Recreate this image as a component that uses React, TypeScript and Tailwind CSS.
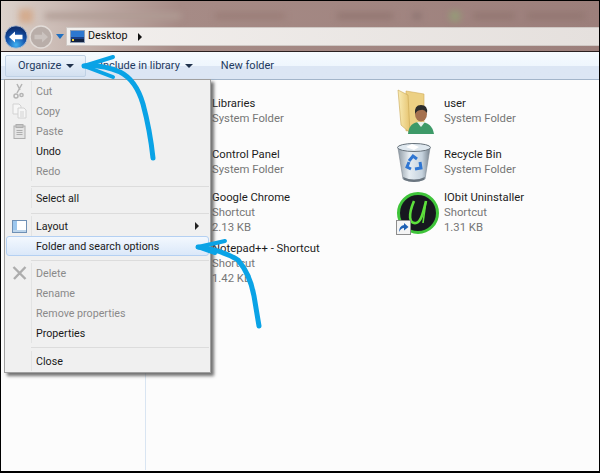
const font = "[font-family:'Roboto','Open_Sans',sans-serif]";

function BackButton() {
    return (
        <svg width="24" height="24" viewBox="0 0 24 24">
            <defs>
                <radialGradient id="back" cx="50%" cy="85%" r="75%">
                    <stop offset="0%" stopColor="#3fb2f2" />
                    <stop offset="55%" stopColor="#1656ae" />
                    <stop offset="100%" stopColor="#0c2f72" />
                </radialGradient>
            </defs>
            <circle cx="12" cy="12" r="11.2" fill="url(#back)" stroke="#b9c8da" strokeWidth="0.8" />
            <path d="M5 12 L11 6.5 V9.8 H18.5 V14.2 H11 V17.5 Z" fill="#fff" />
        </svg>
    );
}

function ForwardButton() {
    return (
        <svg width="24" height="24" viewBox="0 0 24 24">
            <circle cx="12" cy="12" r="11" fill="#b9aea9" stroke="#e2dcd8" strokeWidth="1.4" />
            <path d="M19 12 L13 6.5 V9.8 H5.5 V14.2 H13 V17.5 Z" fill="#cbc3bf" />
        </svg>
    );
}

function MonitorIcon() {
    return (
        <svg width="15" height="13" viewBox="0 0 15 13">
            <rect x="0.5" y="0.5" width="14" height="12" fill="#1b3f86" stroke="#8f9fb5" />
            <rect x="1" y="1" width="13" height="6" fill="#2d77cf" />
            <rect x="1" y="9" width="13" height="3" fill="#12213f" />
            <rect x="2" y="9" width="2" height="2" fill="#f3d23c" />
        </svg>
    );
}

function UserFolderIcon() {
    return (
        <svg width="44" height="46" viewBox="0 0 44 46">
            <defs>
                <linearGradient id="folder" x1="0" y1="0" x2="1" y2="0">
                    <stop offset="0%" stopColor="#f9ecb6" />
                    <stop offset="100%" stopColor="#e6c470" />
                </linearGradient>
            </defs>
            <path d="M10 2 L28 5 V36 L10 42 Z" fill="#ecd084" stroke="#d0ab5b" strokeWidth="0.6" />
            <path d="M2 1 L12 6 L14 44 L5 36 Z" fill="url(#folder)" stroke="#c9a653" strokeWidth="0.6" />
            <path d="M12 45 Q13 33 24 33 Q36 33 38 45 Z" fill="#3d9a68" />
            <path d="M21 33 L25 38 L29 33 Z" fill="#e8f2ec" />
            <ellipse cx="25" cy="25" rx="6" ry="7.5" fill="#a5714f" />
            <path d="M19 25 Q18 16 25 16 Q32 16 31 24 Q28 20 25 21 Q21 21 19 25 Z" fill="#2c2c2c" />
        </svg>
    );
}

function RecycleBinIcon() {
    return (
        <svg width="36" height="42" viewBox="0 0 36 42">
            <defs>
                <linearGradient id="bin" x1="0" y1="0" x2="1" y2="0">
                    <stop offset="0%" stopColor="#8f9ba5" />
                    <stop offset="35%" stopColor="#e6edf2" />
                    <stop offset="75%" stopColor="#c6d3de" />
                    <stop offset="100%" stopColor="#77838e" />
                </linearGradient>
            </defs>
            <path d="M2 6 L7 37 Q18 42 29 37 L34 6 Z" fill="url(#bin)" stroke="#7c8791" strokeWidth="0.6" />
            <ellipse cx="18" cy="5.5" rx="16.5" ry="4" fill="#dfe8ef" stroke="#68737c" strokeWidth="1" />
            <path d="M10 5 L16 2 L23 5 L18 8 Z" fill="#fff" />
            <path d="M7 35 Q18 40 29 35 L28 38 Q18 42 8 38 Z" fill="#6b7680" />
            <g fill="none" stroke="#2f76d2" strokeWidth="3">
                <path d="M13 19 L17 14 L21 17" />
                <path d="M24 20 L25 26 L19 27" />
                <path d="M15 27 L11 25 L13 20" />
            </g>
        </svg>
    );
}

function IObitIcon() {
    return (
        <svg width="44" height="45" viewBox="0 0 44 45">
            <circle cx="22" cy="22" r="19.5" fill="#17171f" stroke="#3fc43a" strokeWidth="3" />
            <path d="M18 10 C12 24 13 33 20 32 C25 31 27 22 30 10" fill="none" stroke="#5de03c" strokeWidth="2.6" />
            <path d="M30 10 L27 32" fill="none" stroke="#5de03c" strokeWidth="1.6" />
            <rect x="0.5" y="29.5" width="14" height="14" fill="#f4f4f4" stroke="#8d8d8d" />
            <path d="M3 41 Q3 35 8 34 V32 L12.5 36 L8 39.5 V37 Q5 37 3 41 Z" fill="#1c5fb4" />
        </svg>
    );
}

function Tile({ name, lines, icon }: { name: string; lines: string[]; icon?: React.ReactNode }) {
    return (
        <div className="flex w-[232px] items-center">
            <div className="flex w-[48px] shrink-0 items-center justify-start">{icon}</div>
            <div className="flex flex-col text-[11.3px] leading-[14.7px] whitespace-nowrap">
                <span className="text-[#1c1c1c]">{name}</span>
                {lines.map((l) => (
                    <span key={l} className="text-[#767676]">{l}</span>
                ))}
            </div>
        </div>
    );
}

function MenuIcon({ name }: { name: string }) {
    if (name === "cut")
        return (
            <svg width="14" height="16" viewBox="0 0 14 16" fill="none" stroke="#b4b4b4" strokeWidth="1.5">
                <path d="M10 1 L5 10 M5 1 L8 7" />
                <circle cx="4" cy="13" r="2" />
                <circle cx="9.5" cy="12" r="1.6" />
            </svg>
        );
    if (name === "copy")
        return (
            <svg width="15" height="16" viewBox="0 0 15 16" fill="#f6f6f6" stroke="#d2d2d2">
                <path d="M1 1 H7 L9 3 V11 H1 Z" />
                <path d="M6 5 H12 L14 7 V15 H6 Z" />
                <path d="M8 9 H12 M8 11 H12 M8 13 H12" />
            </svg>
        );
    if (name === "paste")
        return (
            <svg width="13" height="15" viewBox="0 0 13 15" fill="#e4e4e4" stroke="#aeaeae">
                <rect x="1" y="2" width="11" height="12.5" />
                <rect x="3" y="0.5" width="7" height="3" fill="#c4c4c4" />
                <path d="M3.5 6.5 H9.5 M3.5 8.5 H9.5 M3.5 10.5 H9.5" />
            </svg>
        );
    if (name === "layout")
        return (
            <svg width="15" height="13" viewBox="0 0 15 13">
                <rect x="0.5" y="0.5" width="14" height="12" fill="#fff" stroke="#6f90b5" />
                <rect x="1" y="1" width="4" height="11" fill="#9cc7ee" />
                <rect x="1" y="10" width="13" height="2" fill="#bcd5ec" />
            </svg>
        );
    return (
        <svg width="15" height="14" viewBox="0 0 15 14" fill="none" stroke="#adadad" strokeWidth="2.4">
            <path d="M1.5 1 L13.5 13 M13.5 1 L2 13" />
        </svg>
    );
}

function MenuItem({
    label,
    off,
    icon,
    arrow,
    active,
}: {
    label: string;
    off?: boolean;
    icon?: string;
    arrow?: boolean;
    active?: boolean;
}) {
    return (
        <div
            className={`flex h-[20px] items-center rounded-[3px] border ${
                active ? "border-[#b4d0f2] bg-gradient-to-b from-[#f3f8fe] to-[#dbe8f9]" : "border-transparent"
            }`}
        >
            <div className="flex w-[24px] shrink-0 justify-center">{icon && <MenuIcon name={icon} />}</div>
            <div
                className={`flex h-[20px] flex-1 items-center justify-between border-l pl-[4px] pr-[9px] ${
                    active ? "border-transparent" : "border-[#e2e3e3]"
                } ${off ? "text-[#8a8a8a]" : "text-[#1a1a1a]"}`}
            >
                <span className="pt-[2px]">{label}</span>
                {arrow && <span className="h-0 w-0 border-y-[4px] border-l-[4px] border-y-transparent border-l-[#222]" />}
            </div>
        </div>
    );
}

function Sep({ className }: { className: string }) {
    return (
        <div className="flex pl-[25px]">
            <div className={`h-px flex-1 bg-[#dcdcdc] ${className}`} />
        </div>
    );
}

function OrganizeMenu() {
    return (
        <div className="absolute left-[3px] top-[78px] z-10 flex w-[207px] flex-col border border-[#a0a0a0] bg-[#f0f0f0] p-px text-[10.7px] shadow-[3px_3px_3px_rgba(70,70,70,0.75)]">
            <MenuItem label="Cut" off icon="cut" />
            <MenuItem label="Copy" off icon="copy" />
            <MenuItem label="Paste" off icon="paste" />
            <MenuItem label="Undo" />
            <MenuItem label="Redo" off />
            <Sep className="mb-[1px] mt-[5px]" />
            <MenuItem label="Select all" />
            <Sep className="mb-[2px] mt-[5px]" />
            <MenuItem label="Layout" icon="layout" arrow />
            <MenuItem label="Folder and search options" active />
            <Sep className="mb-[2px] mt-[4px]" />
            <MenuItem label="Delete" off icon="delete" />
            <MenuItem label="Rename" off />
            <MenuItem label="Remove properties" off />
            <MenuItem label="Properties" />
            <Sep className="mb-[3px] mt-[4px]" />
            <MenuItem label="Close" />
        </div>
    );
}

function Caret() {
    return <span className="h-0 w-0 border-x-[4px] border-t-[4px] border-x-transparent border-t-[#20324c]" />;
}

function Arrows() {
    return (
        <svg className="absolute -left-px -top-px z-20" width="600" height="473" viewBox="0 0 600 473" fill="none" stroke="#0aa3e6" strokeLinecap="round" strokeLinejoin="round">
            <path d="M84 66 Q100 64 120 72 Q136 80 143 104 Q150 130 153 158" strokeWidth="5" />
            <path d="M113 57 L84 66 L113 77" strokeWidth="4" />
            <path d="M198 247 Q222 250 238 260 Q250 274 254 296 L259 326" strokeWidth="5" />
            <path d="M225 241 L198 247 L215 253" strokeWidth="4" />
        </svg>
    );
}

export default function App() {
    return (
        <div className={`relative flex h-[473px] w-[600px] flex-col overflow-hidden border-x border-b-2 border-t border-black bg-[#fcfcfc] ${font}`}>
            {/* blurred titlebar behind the address row */}
            <div className="h-[50px] shrink-0 bg-gradient-to-r from-[#dcd2cb] via-[#a68b86] via-30% to-[#9c7f7b]">
                <div className="flex h-[25px] items-center gap-[12px] pl-[18px] pt-[4px] blur-[3px]">
                    <div className="h-[14px] w-[14px] bg-[#d3ab8e]" />
                    <div className="h-[6px] w-[136px] bg-[#b09c94]" />
                    <div className="ml-[22px] h-[6px] w-[70px] bg-[#9a7d77]" />
                    <div className="ml-[40px] h-[6px] w-[56px] bg-[#927671]" />
                    <div className="ml-[8px] h-[6px] w-[8px] bg-[#8a726f]" />
                    <div className="ml-[16px] h-[12px] w-[12px] rounded-full bg-[#959a78]" />
                    <div className="h-[6px] w-[42px] bg-[#927671]" />
                    <div className="h-[6px] w-[58px] bg-[#927671]" />
                </div>
                <div className="flex h-[21px] items-center pl-[3px]">
                    <BackButton />
                    <div className="ml-[1px]">
                        <ForwardButton />
                    </div>
                    <span className="ml-[3px] h-0 w-0 border-x-[4px] border-t-[5px] border-x-transparent border-t-[#1f6fc0]" />
                    <div className="ml-[2px] flex h-[19px] flex-1 items-center border-y border-l border-[#cfc8c4] bg-gradient-to-r from-[#f2efed] to-[#e5e0dd] pl-[3px] text-[10.8px] text-[#111]">
                        <MonitorIcon />
                        <span className="ml-[3px]">Desktop</span>
                        <span className="ml-[10px] h-0 w-0 border-y-[4px] border-l-[4px] border-y-transparent border-l-[#111]" />
                    </div>
                </div>
            </div>
            <div className="h-px shrink-0 bg-[#2a2020]" />
            {/* command bar */}
            <div className="flex h-[28px] shrink-0 items-center border-b border-[#a3b5ca] bg-gradient-to-b from-[#f6fbff] via-[#eff6fd] via-50% to-[#dce6f4] to-50% pl-[4px] text-[11px] text-[#1e3a5f]">
                <div className="flex h-[22px] w-[81px] items-center gap-[5px] rounded-[2px] border border-[#bfd1e5] bg-gradient-to-b from-[#eef5fc] to-[#d3e0f0] pl-[12px]">
                    <span className="pt-px">Organize</span>
                    <Caret />
                </div>
                <div className="ml-[14px] flex items-center gap-[5px]">
                    <span className="pt-px">Include in library</span>
                    <Caret />
                </div>
                <span className="ml-[28px] pt-px">New folder</span>
            </div>
            {/* file view */}
            <div className="flex flex-1">
                <div className="mb-[1px] w-[145px] shrink-0 border-r border-[#d9e5f2]" />
                <div className="grid flex-1 auto-rows-[51px] grid-cols-[232px_232px] content-start pl-[18px] pt-[6px]">
                    <Tile name="Libraries" lines={["System Folder"]} />
                    <Tile name="user" lines={["System Folder"]} icon={<UserFolderIcon />} />
                    <Tile name="Control Panel" lines={["System Folder"]} />
                    <Tile name="Recycle Bin" lines={["System Folder"]} icon={<RecycleBinIcon />} />
                    <Tile name="Google Chrome" lines={["Shortcut", "2.13 KB"]} />
                    <Tile name="IObit Uninstaller" lines={["Shortcut", "1.31 KB"]} icon={<IObitIcon />} />
                    <Tile name="Notepad++ - Shortcut" lines={["Shortcut", "1.42 KB"]} />
                </div>
            </div>
            <OrganizeMenu />
            <Arrows />
        </div>
    );
}
